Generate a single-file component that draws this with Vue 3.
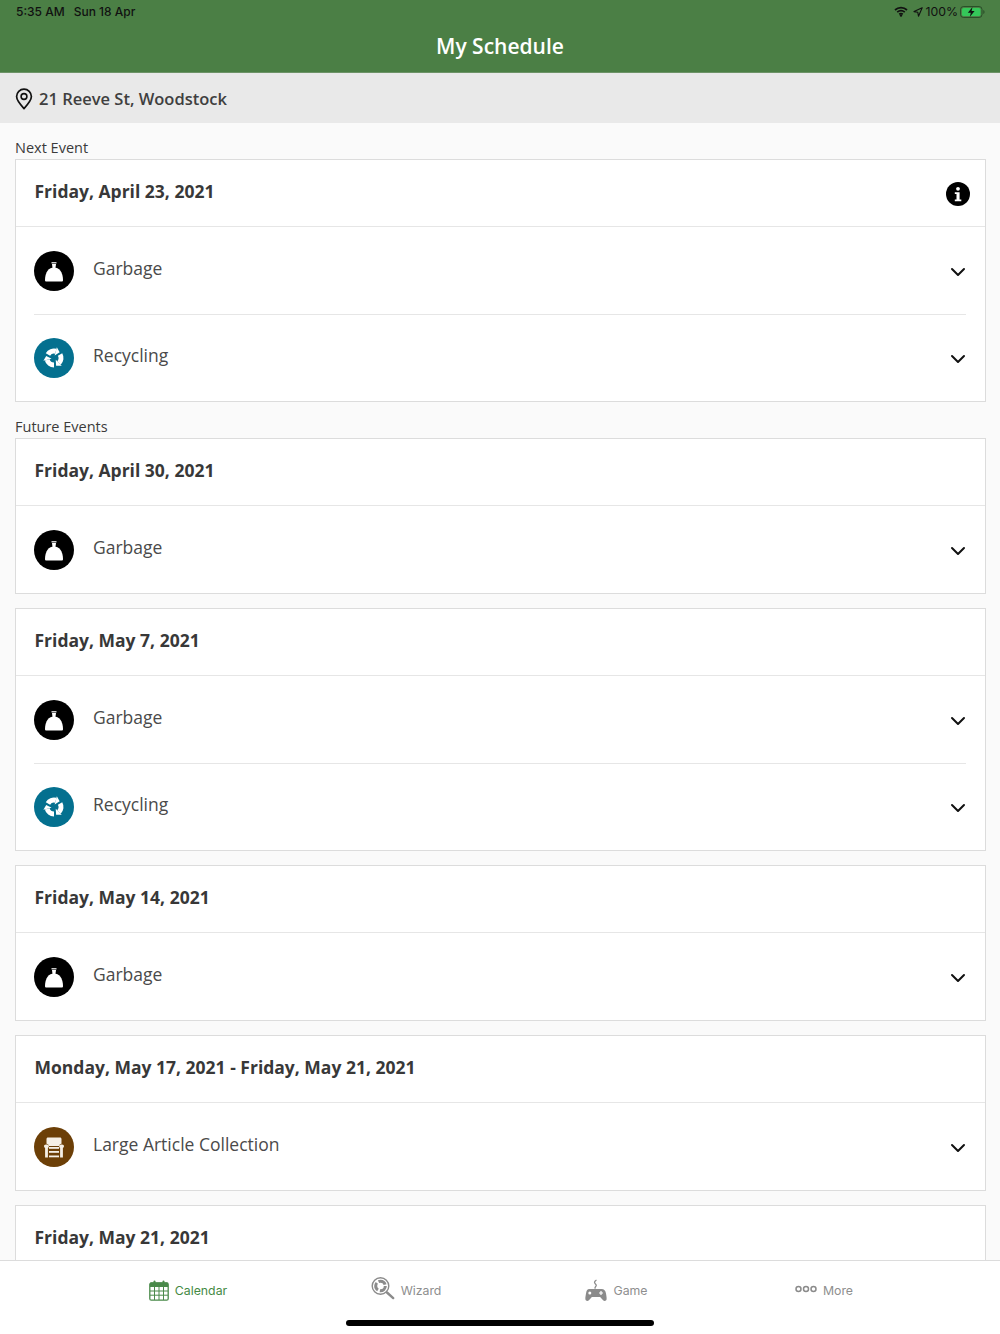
<script setup>
const nextEvents = [
  { date: 'Friday, April 23, 2021', info: true, items: ['garbage', 'recycling'] },
]
const futureEvents = [
  { date: 'Friday, April 30, 2021', items: ['garbage'] },
  { date: 'Friday, May 7, 2021', items: ['garbage', 'recycling'] },
  { date: 'Friday, May 14, 2021', items: ['garbage'] },
  { date: 'Monday, May 17, 2021 - Friday, May 21, 2021', items: ['large'] },
  { date: 'Friday, May 21, 2021', items: [] },
]
const labels = { garbage: 'Garbage', recycling: 'Recycling', large: 'Large Article Collection' }
const sections = [
  { title: 'Next Event', events: nextEvents },
  { title: 'Future Events', events: futureEvents },
]
const turns = [0, 120, 240]
</script>

<template>
  <div class="app">
    <header class="top">
      <div class="status">
        <span class="status-left"><span>5:35 AM</span><span>Sun 18 Apr</span></span>
        <span class="status-right">
          <svg width="14" height="11" viewBox="0 0 14 11"><path d="M1 4a9 9 0 0 1 12 0M3.2 6.2a6 6 0 0 1 7.6 0M5.2 8.2a3 3 0 0 1 3.6 0" fill="none" stroke="#111" stroke-width="1.7"/><circle cx="7" cy="9.6" r="1.2" fill="#111"/></svg>
          <svg class="arrow" width="10" height="10" viewBox="0 0 10 10"><path d="M9.2.8 1 4.6l3.8.7.7 3.9z" fill="none" stroke="#111" stroke-width="1.1" stroke-linejoin="round"/></svg>
          <span>100%</span>
          <svg width="25" height="12" viewBox="0 0 25 12"><rect x=".5" y=".5" width="21.5" height="11" rx="3" fill="none" stroke="#1d3a1d" stroke-opacity=".7"/><rect x="2" y="2" width="18.5" height="8" rx="1.6" fill="#35c759"/><path d="M23.3 4v4c.8-.3 1.2-1 1.2-2s-.4-1.700-1.200-2z" fill="#1d3a1d" fill-opacity=".7"/><path d="M12.500 1 7.800 6.800h3l-1 4.200 4.800-6h-3z" fill="#111"/></svg>
        </span>
      </div>
      <h1>My Schedule</h1>
    </header>

    <div class="address">
      <svg width="18" height="22" viewBox="0 0 18 22"><path d="M9 20.600C5 16.300 1.600 12.500 1.600 8.600a7.400 7.400 0 0 1 14.800 0c0 3.900-3.400 7.700-7.400 12z" fill="none" stroke="#111" stroke-width="1.700" stroke-linejoin="round"/><circle cx="9" cy="8.500" r="2.900" fill="none" stroke="#111" stroke-width="1.600"/></svg>
      <span>21 Reeve St, Woodstock</span>
    </div>

    <main class="content">
      <section v-for="section in sections" :key="section.title" class="section">
        <div class="section-title">{{ section.title }}</div>
        <div class="cards">
          <article v-for="event in section.events" :key="event.date" class="card">
            <div class="card-head">
              <span class="date">{{ event.date }}</span>
              <svg v-if="event.info" class="info" width="24" height="24" viewBox="0 0 24 24">
                <circle cx="12" cy="12" r="12" fill="#000"/>
                <circle cx="12" cy="6.800" r="1.900" fill="#fff"/>
                <path d="M8.800 10.200h4.800v7.200h1.700v1.800H8.800v-1.800h1.700v-5.400H8.800z" fill="#fff"/>
              </svg>
            </div>
            <div v-if="event.items.length" class="rows">
              <div v-for="item in event.items" :key="item" class="row">
                <span class="badge" :class="item">
                  <svg v-if="item === 'garbage'" width="18" height="21" viewBox="0 0 18 21">
                    <path d="M1.400 20.500C.5 20.500 0 20 0 19 0 11 4 6.500 9 6.500S18 11 18 19c0 1-.5 1.500-1.400 1.500z" fill="#fff"/>
                    <path d="M7.600 7.500 7 3h4l-.6 4.500z" fill="#fff"/>
                    <path d="M6.500 1.800h5" stroke="#fff" stroke-width="1.200"/>
                  </svg>
                  <svg v-else-if="item === 'recycling'" width="22" height="22" viewBox="0 0 22 22">
                    <g v-for="turn in turns" :key="turn" :transform="`rotate(${turn} 11 11)`">
                      <path d="M4.940 7.500A7 7 0 0 1 12.810 4.240" fill="none" stroke="#fff" stroke-width="5"/>
                      <path d="M11.650 8.590 13.850.37 16.670 5.280z" fill="#fff"/>
                    </g>
                  </svg>
                  <svg v-else width="20" height="21" viewBox="0 0 20 21">
                    <path d="M4 .5h12c.9 0 1.500.6 1.500 1.500v4.700c-1.300.2-2.300 1.100-2.500 2.300H5c-.2-1.200-1.200-2.100-2.500-2.300V2C2.500 1.100 3.100.5 4 .5z" fill="#f5efe6"/>
                    <path d="M2 7.500c-1.200 0-2 .8-2 1.800 0 .8.400 1.400 1.100 1.700v9.500h2.800V11c.7-.3 1-.9 1-1.700 0-1-.8-1.800-1.900-1.800zM18 7.500c1.200 0 2 .8 2 1.800 0 .8-.4 1.400-1.100 1.700v9.500h-2.800V11c-.7-.3-1-.9-1-1.700 0-1 .8-1.800 1.900-1.800z" fill="#f5efe6"/>
                    <rect x="5" y="10" width="10" height="1.800" fill="#f5efe6"/>
                    <rect x="5" y="14" width="10" height="1.800" fill="#f5efe6"/>
                    <rect x="5" y="18.500" width="10" height="1.800" fill="#f5efe6"/>
                  </svg>
                </span>
                <span class="label">{{ labels[item] }}</span>
                <svg class="chevron" width="16" height="10" viewBox="0 0 16 10"><path d="M2 2l6 6 6-6" fill="none" stroke="#111" stroke-width="2" stroke-linecap="round" stroke-linejoin="round"/></svg>
              </div>
            </div>
          </article>
        </div>
      </section>
    </main>

    <nav class="tabs">
      <div class="tab active">
        <svg width="20" height="21" viewBox="0 0 20 21"><rect x=".8" y="3" width="18.400" height="17.200" rx="1.500" fill="none" stroke="#4a8a4a" stroke-width="1.300"/><path d="M1 3.500a1 1 0 0 1 1-1h16a1 1 0 0 1 1 1V7H1z" fill="#4a8a4a"/><rect x="4.500" y=".6" width="2" height="4" rx="1" fill="#4a8a4a"/><rect x="13.500" y=".6" width="2" height="4" rx="1" fill="#4a8a4a"/><path d="M1 11h18M1 15.200h18M5.500 7v13M10 7v13M14.500 7v13" stroke="#4a8a4a" stroke-width="1"/></svg>
        <span>Calendar</span>
      </div>
      <div class="tab">
        <svg class="wizard-icon" width="24" height="23" viewBox="0 0 24 23"><circle cx="9.500" cy="9" r="8.300" fill="none" stroke="#8b8b8b" stroke-width="1.400"/><circle cx="9.500" cy="9" r="4.800" fill="none" stroke="#8b8b8b" stroke-width="3" stroke-dasharray="8 2"/><path d="M16 15.500l6.200 5.600" stroke="#8b8b8b" stroke-width="2.400" stroke-linecap="round"/></svg>
        <span>Wizard</span>
      </div>
      <div class="tab">
        <svg width="23" height="23" viewBox="0 0 23 23"><path d="M11.500 9.500c-1.800-1.200 1.800-2.300.6-3.700C11 4.700 9.700 3.900 10.800 2.500 11.200 2 11.600 1.500 12.500 1" fill="none" stroke="#8b8b8b" stroke-width="1.300"/><path d="M5.500 10h12c2.700 0 4 1.500 4.500 4.500.4 2.500.8 4.200.6 5.800-.2 1.700-2.300 2.300-3.500 1l-3-3.300H7.900l-3 3.300c-1.200 1.300-3.300.7-3.500-1-.2-1.600.2-3.300.6-5.800C2.500 11.500 3 10 5.500 10z" fill="#8b8b8b"/><circle cx="5.800" cy="14" r="1.500" fill="#fff"/><path d="M17 12v4M15 14h4" stroke="#fff" stroke-width="1.200"/></svg>
        <span>Game</span>
      </div>
      <div class="tab">
        <svg class="more-icon" width="22" height="8" viewBox="0 0 22 8"><circle cx="3.500" cy="4" r="2.500" fill="none" stroke="#8b8b8b" stroke-width="1.500"/><circle cx="11" cy="4" r="2.500" fill="none" stroke="#8b8b8b" stroke-width="1.500"/><circle cx="18.500" cy="4" r="2.500" fill="none" stroke="#8b8b8b" stroke-width="1.500"/></svg>
        <span>More</span>
      </div>
      <div class="home"></div>
    </nav>
  </div>
</template>

<style scoped>
.app { width: 1000px; height: 1334px; display: flex; flex-direction: column; overflow: hidden; background: #fafafa; font-family: "Open Sans", sans-serif; color: #3b3b3b; }
.top { height: 73px; flex: none; box-sizing: border-box; background: #4b7f45; border-bottom: 1px solid #6d9367; position: relative; }
.status { height: 23px; padding: 0 15px 0 16px; display: flex; align-items: center; justify-content: space-between; font-family: Inter, sans-serif; font-size: 12px; color: #111; }
.status-left { display: flex; gap: 9px; font-weight: 500; }
.status-right { display: flex; align-items: center; gap: 2px; font-size: 12.3px; }
.arrow { margin-left: 3px; }
h1 { margin: 0; text-align: center; color: #fff; font-size: 21px; font-weight: 600; line-height: 30px; padding-top: 8px; }
.address { height: 50px; flex: none; box-sizing: border-box; padding: 1px 15px 0; background: #e9e9e9; display: flex; align-items: center; gap: 6px; font-size: 16.5px; font-weight: 600; color: #3f3f3f; }
.content { flex: 1; min-height: 0; overflow: hidden; padding: 14px 14px 0 15px; display: flex; flex-direction: column; gap: 14px; }
.section { flex: none; }
.section-title { font-size: 14.5px; line-height: 22px; color: #3b3b3b; }
.cards { display: flex; flex-direction: column; gap: 14px; }
.card { background: #fff; border: 1px solid #dcdcdc; flex: none; }
.card-head { height: 67px; box-sizing: border-box; display: flex; align-items: center; justify-content: space-between; padding: 0 15px 5px 18.5px; border-bottom: 1px solid #e6e6e6; }
.date { font-size: 17.5px; font-weight: 700; color: #383838; }
.info { margin-top: 6px; }
.rows { padding: 0 19px 0 18px; }
.row { height: 87px; box-sizing: border-box; display: flex; align-items: center; }
.row + .row { border-top: 1px solid #e6e6e6; padding-bottom: 1px; }
.badge { width: 40px; height: 40px; flex: none; border-radius: 50%; display: flex; align-items: center; justify-content: center; margin-top: 1px; }
.badge.garbage { background: #000; }
.badge.recycling { background: #04708f; }
.badge.large { background: #6c3f07; }
.label { flex: 1; margin-left: 19px; font-size: 17.5px; color: #4a4a4a; margin-top: -5px; }
.chevron { margin-top: 2px; flex: none; }
.tabs { height: 74px; flex: none; box-sizing: border-box; background: #fff; border-top: 1px solid #dcdcdc; display: flex; position: relative; padding: 15px 0 0 83px; align-items: flex-start; }
.tab { display: flex; align-items: center; justify-content: center; gap: 6px; font-family: Inter, sans-serif; font-size: 12.3px; color: #8e8e8e; height: 28px; }
.tab:nth-child(1) { width: 210px; }
.tab:nth-child(2) { width: 226px; }
.tab:nth-child(3) { width: 194px; }
.tab:nth-child(4) { width: 222px; }
.tab.active { color: #458a45; }
.wizard-icon { margin-top: -3px; }
.more-icon { margin-top: -2px; }
.home { position: absolute; left: 346px; bottom: 8px; width: 308px; height: 6px; border-radius: 3px; background: #000; }
</style>
